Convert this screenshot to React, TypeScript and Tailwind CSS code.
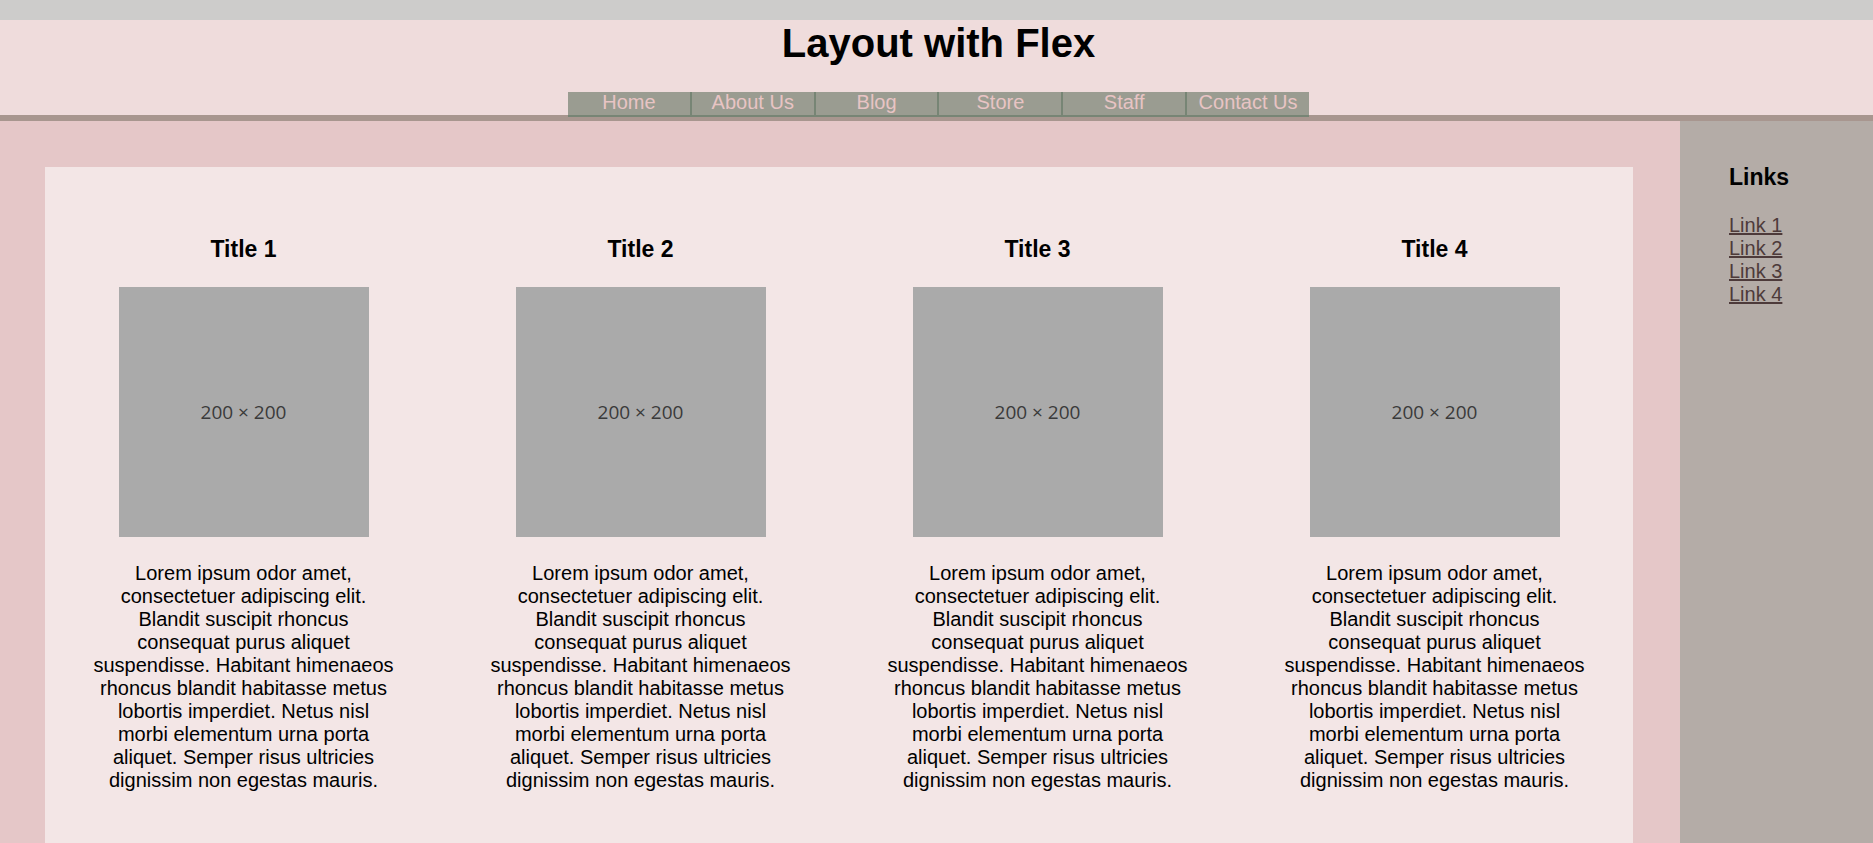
import React from 'react';

const navItems = ['Home', 'About Us', 'Blog', 'Store', 'Staff', 'Contact Us'];
const titles = ['Title 1', 'Title 2', 'Title 3', 'Title 4'];
const links = ['Link 1', 'Link 2', 'Link 3', 'Link 4'];

const lorem =
  'Lorem ipsum odor amet, consectetuer adipiscing elit. Blandit suscipit rhoncus consequat purus aliquet suspendisse. Habitant himenaeos rhoncus blandit habitasse metus lobortis imperdiet. Netus nisl morbi elementum urna porta aliquet. Semper risus ultricies dignissim non egestas mauris.';

function Card({ title }: { title: string }) {
  return (
    <div className="flex flex-col items-center px-[45px] pt-[45px] pb-[45px] text-center">
      <h3 className="mt-[24px] text-[23px] font-bold leading-[27px] text-black">{title}</h3>
      {/* placeholder image */}
      <div className="mt-[24px] flex h-[250px] w-[250px] items-center justify-center bg-[#aaaaaa]">
        <span className="font-['Open_Sans',sans-serif] text-[19px] text-[#3a3a3a]">200 × 200</span>
      </div>
      <p className="mt-[25px] mb-[20px] w-[303px] text-[20px] leading-[23px] text-black">{lorem}</p>
    </div>
  );
}

export default function App() {
  return (
    <div className="min-h-screen bg-[#e5c7c8] font-['Liberation_Sans',Arial,sans-serif]">
      {/* Header */}
      <header className="border-b-[6px] border-[#a8968f] bg-[#efdcdc]">
        <div className="h-[20px] bg-[#cdcccb]" />
        <div className="pl-[4px]">
          <h1 className="text-center text-[40px] font-bold leading-[46px] text-black">Layout with Flex</h1>
          <nav className="relative z-10 mx-auto mt-[26px] -mb-[2px] flex w-[741px] border-b-2 border-[#778575] bg-[#9a9c91]">
            {navItems.map((item, i) => (
              <a
                key={item}
                href="#"
                className={`flex-1 pb-[2px] text-center text-[20px] leading-[21px] text-[#e8c4c4] ${i > 0 ? 'border-l-2 border-[#778575]' : ''}`}
              >
                {item}
              </a>
            ))}
          </nav>
        </div>
      </header>

      {/* Main + sidebar */}
      <div className="flex">
        <main className="flex-1 pt-[46px] pb-[45px] pl-[45px] pr-[47px]">
          <div className="grid grid-cols-4 bg-[#f3e6e6]">
            {titles.map((t) => (
              <Card key={t} title={t} />
            ))}
          </div>
        </main>
        <aside className="w-[193px] shrink-0 bg-[#b4aca7] pl-[49px] pt-[43px]">
          <h3 className="text-[23px] font-bold leading-[27px] text-black">Links</h3>
          <ul className="mt-[23px]">
            {links.map((l) => (
              <li key={l} className="text-[20px] leading-[23px]">
                <a href="#" className="text-[#4d3a3a] underline">
                  {l}
                </a>
              </li>
            ))}
          </ul>
        </aside>
      </div>
    </div>
  );
}
